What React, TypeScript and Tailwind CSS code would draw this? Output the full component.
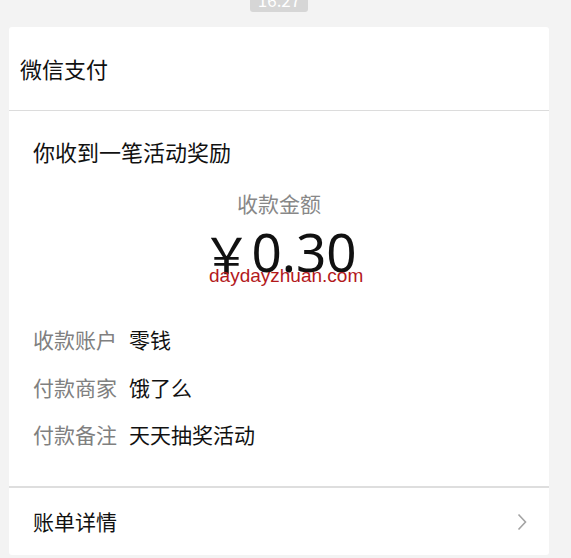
const cjk = "font-['Noto_Sans_CJK_SC','Noto_Sans',sans-serif]"

const rows = [
  { label: '收款账户', value: '零钱' },
  { label: '付款商家', value: '饿了么' },
  { label: '付款备注', value: '天天抽奖活动' },
]

export default function App() {
  return (
    <div className={`h-[558px] w-full bg-[#f3f3f3] ${cjk} text-[#111]`}>
      {/* time badge, cut off by the top of the window */}
      <div className="ml-[250px] h-[12px] w-[58px] overflow-hidden rounded-b-[3px] bg-[#d6d6d6]">
        <div className="-mt-[11px] text-center text-[17px] leading-[22px] text-white">16:27</div>
      </div>

      <div className="ml-[9px] mt-[15px] w-[540px] rounded-[3px] bg-white">
        <div className="flex h-[84px] items-center border-b border-[#dcdcdc] pl-[11px] text-[22px]">
          微信支付
        </div>

        <div className="pl-[24px] pb-[37px] pt-[25px]">
          <div className="text-[22px] leading-[30px]">你收到一笔活动奖励</div>

          <div className="mt-[22px] pr-[24px] text-center text-[21px] leading-[30px] text-[#888]">收款金额</div>

          <div className="relative mt-[4px] flex h-[60px] items-center justify-center pr-[24px]">
            <span className="text-[50px] leading-[60px]">￥</span>
            <span className="font-['Noto_Sans',sans-serif] text-[53px] leading-[60px]">0.30</span>
            <span className="absolute left-[176px] top-[43px] font-['Liberation_Sans',sans-serif] text-[19px] leading-[22px] text-[#b3191c]">
              daydayzhuan.com
            </span>
          </div>

          <div className="mt-[42px] flex flex-col gap-[17.5px]">
            {rows.map((r) => (
              <div key={r.label} className="flex text-[21px] leading-[30px]">
                <span className="w-[96px] text-[#808080]">{r.label}</span>
                <span>{r.value}</span>
              </div>
            ))}
          </div>
        </div>

        <div className="flex h-[69px] items-center justify-between border-t-2 border-[#dedede] pl-[24px] pr-[22px]">
          <span className="text-[21px]">账单详情</span>
          <svg width="10" height="18" viewBox="0 0 10 18" fill="none" className="text-[#a3a3a3]">
            <path d="M1.5 1.5 L8.5 9 L1.5 16.5" stroke="currentColor" strokeWidth="1.6" />
          </svg>
        </div>
      </div>
    </div>
  )
}
